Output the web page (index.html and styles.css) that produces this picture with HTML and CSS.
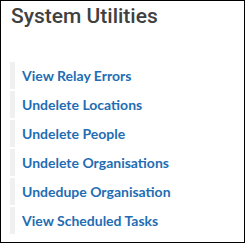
FILE: index.html
```html
<!DOCTYPE html>
<html lang="en">
<head>
    <meta charset="UTF-8">
    <title>System Utilities</title>
    <link rel="stylesheet" href="styles.css">
</head>
<body>
    <div class="panel">
        <h2 class="panel-title">System Utilities</h2>
        <ul class="utility-list">
            <li><a href="#">View Relay Errors</a></li>
            <li><a href="#">Undelete Locations</a></li>
            <li><a href="#">Undelete People</a></li>
            <li><a href="#">Undelete Organisations</a></li>
            <li><a href="#">Undedupe Organisation</a></li>
            <li><a href="#">View Scheduled Tasks</a></li>
        </ul>
    </div>
</body>
</html>
```

FILE: styles.css
```css
* {
    margin: 0;
    padding: 0;
    box-sizing: border-box;
}

body {
    font-family: Roboto, 'Liberation Sans', sans-serif;
    background: #ffffff;
}

.panel {
    width: 245px;
    height: 243px;
    border: 1px solid #000000;
}

.panel-title {
    font-size: 21px;
    font-weight: 500;
    line-height: 30px;
    color: #404040;
    padding-left: 10px;
}

.utility-list {
    list-style: none;
    margin-top: 31px;
    padding-left: 9px;
}

.utility-list li {
    height: 27px;
    margin-bottom: 2px;
    border-left: 5px solid #f0f0f0;
    padding-left: 7px;
    display: flex;
    align-items: center;
}

.utility-list a {
    font-family: Lato, 'Liberation Sans', sans-serif;
    font-size: 14px;
    font-weight: 700;
    color: #1f6db3;
    text-decoration: none;
}
```
